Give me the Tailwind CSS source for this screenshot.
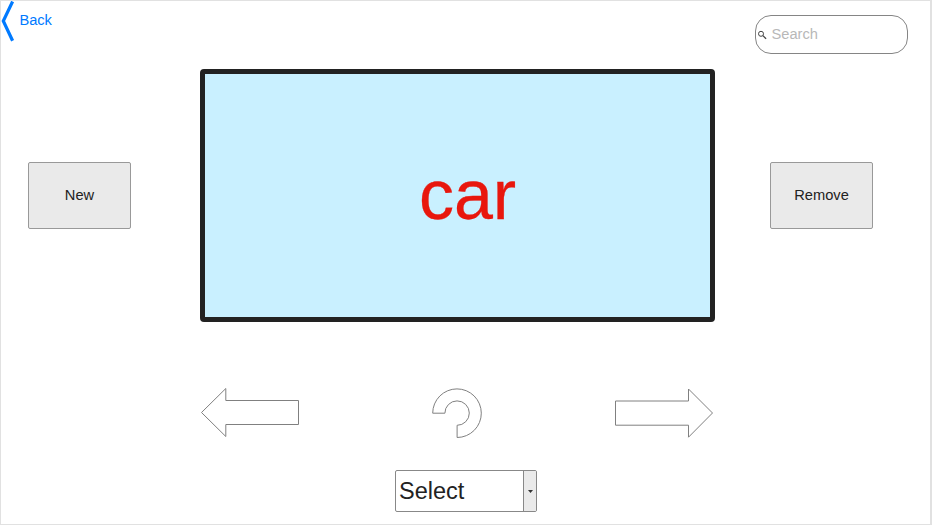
<!DOCTYPE html>
<html lang="en">
<head>
<meta charset="utf-8">
<title>Flashcards</title>
<script src="https://cdn.jsdelivr.net/npm/@tailwindcss/browser@4"></script>
</head>
<body class="bg-white">
<main class="flex h-[525px] w-[932px] flex-col overflow-hidden border border-r-2 border-[#e1e1e1] bg-white font-['Liberation_Sans',Arial,sans-serif] text-[14.67px] text-[#222]">
  <header class="flex h-[68px] shrink-0 items-start justify-between pr-[22px]">
    <a class="flex items-start text-[#007aff]">
      <svg class="h-[42px] w-[14px] shrink-0" viewBox="0 0 14 42" fill="none" stroke="currentColor" stroke-width="3.2"><path d="M11.6 0.5L2.3 20L11.6 39.8"/></svg>
      <span class="mt-[9px] ml-[4.5px] leading-5 tracking-[-0.1px]">Back</span>
    </a>
    <label class="mt-[14px] flex h-[39px] w-[153px] items-center rounded-[16px] border border-[#858585] pl-[2px]">
      <svg class="h-[10px] w-[10px]" viewBox="0 0 10 10" fill="none" stroke="#444"><circle cx="3" cy="3.8" r="2.5"/><path d="M4.9 5.6L8.1 8.8" stroke-width="1.3"/></svg>
      <span class="ml-[3.5px] pb-[2px] leading-5 text-[#b8b8b8]">Search</span>
    </label>
  </header>
  <section class="flex h-[254px] shrink-0 items-start justify-between pr-[57px] pl-[27px]">
    <button class="mt-[93px] h-[67px] w-[103px] rounded-[2px] border border-[#999] bg-[#eaeaea] pb-px">New</button>
    <div class="mr-[55px] ml-[68px] flex h-[253px] w-[515px] items-center justify-center rounded-[4px] border-[5px] border-[#222] bg-[#c9f0ff] pb-[2px] pl-[21px] text-[70px] leading-none text-[#e8170d] [-webkit-text-stroke:0.3px_#e8170d]">car</div>
    <button class="mt-[93px] h-[67px] w-[103px] rounded-[2px] border border-[#999] bg-[#eaeaea] pb-px">Remove</button>
  </section>
  <nav class="mt-[64px] flex h-[52px] shrink-0 items-start justify-between pr-[216px] pl-[199px]">
    <svg class="h-[52px] w-[101px]" viewBox="0 0 101 52" fill="white" stroke="#808080"><path d="M1.5 25.5L25.8 1.5V13.5H98.5V37.5H25.8V49.5Z"/></svg>
    <svg class="h-[52px] w-[52px]" viewBox="0 0 52 52" fill="white" stroke="#808080"><path d="M1.7 26.2A24.3 24.3 0 1 1 26.1 50.5V38.3A12.2 12.2 0 1 0 13.9 26.2Z"/></svg>
    <svg class="h-[52px] w-[101px]" viewBox="0 0 101 52" fill="white" stroke="#808080"><path d="M99.5 26L75.5 2V14H2.5V38.2H75.5V50.2Z"/></svg>
  </nav>
  <div class="mt-[31px] ml-[394px] flex h-[42px] w-[142px] shrink-0 overflow-hidden rounded-[2px] border border-[#888] bg-white">
    <span class="flex-1 pl-[3px] text-[23.5px] leading-[40px]">Select</span>
    <span class="flex w-[13px] items-center justify-center border-l border-[#888] bg-[#eaeaea]"><svg class="h-[3px] w-[5px]" viewBox="0 0 5 3"><path d="M0 0H5L2.5 3Z" fill="#333"/></svg></span>
  </div>
</main>
</body>
</html>
